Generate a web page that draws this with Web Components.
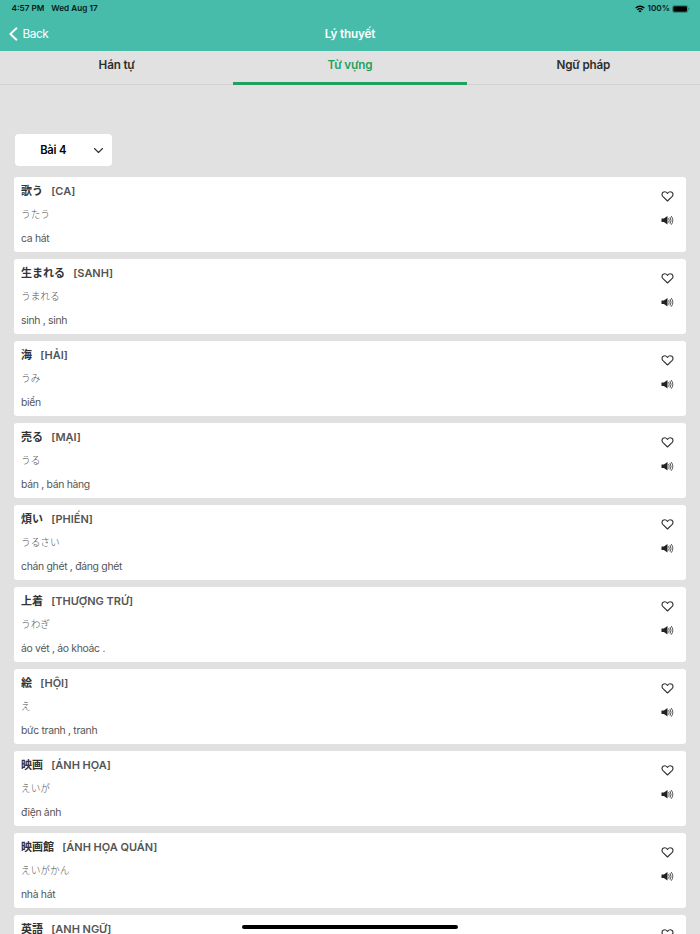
<!DOCTYPE html>
<html lang="vi">
<head>
<meta charset="utf-8">
<meta name="viewport" content="width=device-width, initial-scale=1">
<title>Lý thuyết</title>
<style>
  html, body { height: 100%; }
  body {
    margin: 0;
    overflow: hidden;
    background: #e1e1e1;
    font-family: Inter, "Noto Sans CJK JP", sans-serif;
  }
</style>
</head>
<body>
<theory-app></theory-app>

<script>
const WORDS = [
  ['歌う', 'CA', 'うたう', 'ca hát'],
  ['生まれる', 'SANH', 'うまれる', 'sinh , sinh'],
  ['海', 'HẢI', 'うみ', 'biển'],
  ['売る', 'MẠI', 'うる', 'bán , bán hàng'],
  ['煩い', 'PHIẾN', 'うるさい', 'chán ghét , đáng ghét'],
  ['上着', 'THƯỢNG TRỨ', 'うわぎ', 'áo vét , áo khoác .'],
  ['絵', 'HỘI', 'え', 'bức tranh , tranh'],
  ['映画', 'ÁNH HỌA', 'えいが', 'điện ảnh'],
  ['映画館', 'ÁNH HỌA QUÁN', 'えいがかん', 'nhà hát'],
  ['英語', 'ANH NGỮ', '', ''],
];

class StatusBar extends HTMLElement {
  constructor() {
    super();
    this.attachShadow({ mode: 'open' });
    this.shadowRoot.innerHTML = `
    <style>
      :host {
        display: flex;
        align-items: center;
        height: 17px;
        padding: 0 10px 0 11.5px;
        color: #081a17;
        font-size: 8.2px;
        font-weight: 600;
        line-height: 17px;
      }
      .date { margin-left: 7px; flex: 1; }
      .wifi { width: 10px; height: 8px; margin-right: 2.5px; }
      .battery { width: 18px; height: 8px; margin-left: 2px; }
    </style>
    <span><slot name="time"></slot></span>
    <span class="date"><slot name="date"></slot></span>
    <svg class="wifi" viewBox="0 0 20 16" fill="none" stroke="#000" stroke-width="2.6">
      <path d="M1.2 6.2a12.4 12.4 0 0 1 17.6 0M4.6 9.7a7.6 7.6 0 0 1 10.8 0"/>
      <path d="M10 15.2l-3.2-3.3a4.6 4.6 0 0 1 6.4 0z" fill="#000" stroke="none"/>
    </svg>
    <span><slot name="level"></slot></span>
    <svg class="battery" viewBox="0 0 18 8">
      <rect x=".5" y=".4" width="15.3" height="7.2" rx="2" fill="none" stroke="#000" stroke-opacity=".4" stroke-width=".7"/>
      <rect x="1.3" y="1.2" width="13.7" height="5.6" rx="1.2"/>
      <path d="M16.6 2.8v2.4q.9-.3.9-1.2t-.9-1.2z" opacity=".45"/>
    </svg>
    `;
  }
}
customElements.define('status-bar', StatusBar);

class NavBar extends HTMLElement {
  constructor() {
    super();
    this.attachShadow({ mode: 'open' });
    this.shadowRoot.innerHTML = `
    <style>
      :host {
        display: grid;
        grid-template-columns: 1fr auto 1fr;
        align-items: center;
        height: 34px;
        padding: 0 9px;
        color: #fff;
        font-size: 12px;
        line-height: 34px;
      }
      .back { display: flex; align-items: center; gap: 4.5px; font-size: 11.8px; letter-spacing: -.45px; }
      .back svg { width: 9px; height: 14px; }
      .title { font-size: 11.7px; font-weight: 600; letter-spacing: -.15px; }
    </style>
    <div class="back">
      <svg viewBox="0 0 9 14" fill="none" stroke="#fff" stroke-width="1.9" stroke-linecap="round" stroke-linejoin="round">
        <path d="M7.4 1.3L1.4 7l6 5.7"/>
      </svg>
      <slot name="back"></slot>
    </div>
    <div class="title"><slot></slot></div>
    `;
  }
}
customElements.define('nav-bar', NavBar);

class TabItem extends HTMLElement {
  constructor() {
    super();
    this.attachShadow({ mode: 'open' });
    this.shadowRoot.innerHTML = `
    <style>
      :host {
        display: block;
        box-sizing: border-box;
        flex: 1;
        height: 34px;
        text-align: center;
        color: #2d2d2d;
        font-size: 11.7px;
        font-weight: 600;
        letter-spacing: -.18px;
        line-height: 28px;
        border-bottom: 1px solid #d2d2d2;
      }
      :host([active]) { color: #1fa15d; border-bottom: 3px solid #1fa15d; }
    </style>
    <slot></slot>
    `;
  }
}
customElements.define('tab-item', TabItem);

class LessonSelect extends HTMLElement {
  constructor() {
    super();
    this.attachShadow({ mode: 'open' });
    this.shadowRoot.innerHTML = `
    <style>
      :host {
        display: flex;
        align-items: center;
        box-sizing: border-box;
        width: 97.5px;
        height: 32.5px;
        padding-right: 8px;
        border-radius: 4px;
        background: #fff;
        color: #000;
        font-size: 11.2px;
        font-weight: 600;
        letter-spacing: -.15px;
      }
      span { flex: 1; text-align: center; padding-right: 1px; }
      svg { width: 11px; height: 7px; margin-top: 1px; }
    </style>
    <span><slot></slot></span>
    <svg viewBox="0 0 11 7" fill="none" stroke="#333" stroke-width="1.1" stroke-linecap="round" stroke-linejoin="round">
      <path d="M1.5 1.5l4 4 4-4"/>
    </svg>
    `;
  }
}
customElements.define('lesson-select', LessonSelect);

class WordCard extends HTMLElement {
  constructor() {
    super();
    this.attachShadow({ mode: 'open' });
    this.shadowRoot.innerHTML = `
    <style>
      :host {
        display: flex;
        flex: none;
        justify-content: space-between;
        box-sizing: border-box;
        height: 75px;
        padding: 6px 12px 0 7px;
        border-radius: 3px;
        background: #fff;
        color: #555;
        font-size: 11px;
        line-height: 16px;
      }
      .head { display: flex; gap: 8.3px; height: 16px; font-weight: 600; }
      .word { color: #333; font-weight: 700; }
      .han { letter-spacing: -.03px; }
      .kana { height: 16px; margin-top: 7.5px; color: #505050; font-size: 9.7px; font-weight: 300; }
      .mean { height: 16px; margin-top: 8px; font-size: 10.4px; letter-spacing: -.3px; }
      .actions { display: flex; flex-direction: column; align-items: center; gap: 13px; padding-top: 7.5px; }
      svg { display: block; width: 13px; height: 11px; }
    </style>
    <div>
      <div class="head"><span class="word"><slot name="word"></slot></span><span class="han"><slot name="han"></slot></span></div>
      <div class="kana"><slot name="kana"></slot></div>
      <div class="mean"><slot name="mean"></slot></div>
    </div>
    <div class="actions">
      <svg viewBox="0 0 13 11" fill="none" stroke="#333" stroke-width="1.15" stroke-linejoin="round">
        <path d="M6.5 10L2 5.7C.6 4.3.8 2.2 2.1 1.3 3.5.4 5.3.8 6.5 2.3 7.7.8 9.5.4 10.9 1.3c1.3.9 1.5 3 .1 4.4z"/>
      </svg>
      <svg viewBox="0 0 13 11">
        <path d="M.5 3.6h2.4L6.5 1v8.6L2.9 7.1H.5z" fill="#222"/>
        <path d="M7.8 3.5q1.1 1.9 0 3.8M9.2 2.4q1.9 3 0 6M10.5 1.4q2.9 4 0 8" fill="none" stroke="#333" stroke-width=".85" stroke-linecap="round"/>
      </svg>
    </div>
    `;
  }
}
customElements.define('word-card', WordCard);

class TheoryApp extends HTMLElement {
  constructor() {
    super();
    this.attachShadow({ mode: 'open' });
    const cards = WORDS.map(([word, han, kana, mean]) => `
      <word-card>
        <span slot="word">${word}</span>
        <span slot="han">[${han}]</span>
        <span slot="kana">${kana}</span>
        <span slot="mean">${mean}</span>
      </word-card>`).join('');
    this.shadowRoot.innerHTML = `
    <style>
      :host { display: block; position: relative; height: 100vh; overflow: hidden; }
      header { background: #47bcab; }
      .tabs { display: flex; }
      main { padding: 48.5px 14px 0; }
      lesson-select { margin-left: .5px; }
      .list { display: flex; flex-direction: column; gap: 7px; margin-top: 11.4px; }
      .home {
        position: absolute;
        left: 242px;
        bottom: 5.5px;
        width: 216px;
        height: 4px;
        border-radius: 2px;
        background: #000;
      }
    </style>
    <header>
      <status-bar>
        <span slot="time">4:57 PM</span>
        <span slot="date">Wed Aug 17</span>
        <span slot="level">100%</span>
      </status-bar>
      <nav-bar><span slot="back">Back</span>Lý thuyết</nav-bar>
    </header>
    <div class="tabs">
      <tab-item>Hán tự</tab-item>
      <tab-item active>Từ vựng</tab-item>
      <tab-item>Ngữ pháp</tab-item>
    </div>
    <main>
      <lesson-select>Bài 4</lesson-select>
      <div class="list">${cards}</div>
    </main>
    <div class="home"></div>
    `;
  }
}
customElements.define('theory-app', TheoryApp);
</script>
</body>
</html>
